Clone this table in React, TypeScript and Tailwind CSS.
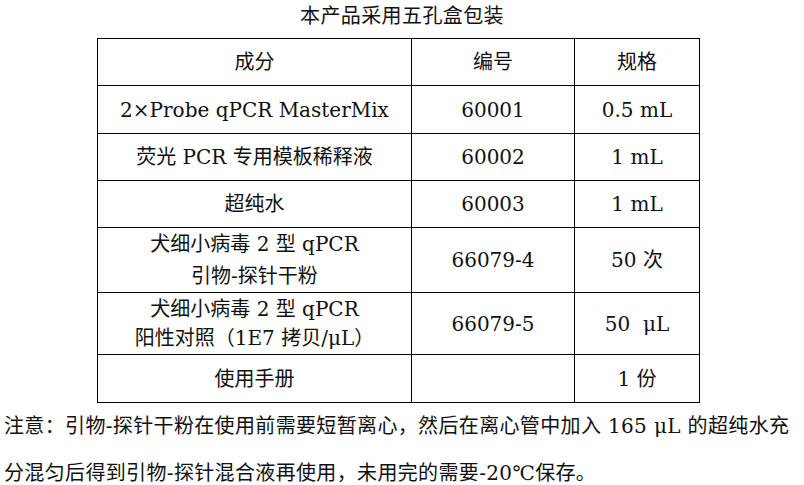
import React from "react";

const font = { fontFamily: '"DejaVu Serif", "Noto Sans CJK SC", serif' };

type Row = { a: React.ReactNode; b: string; c: React.ReactNode; h: string; lead?: string };

const rows: Row[] = [
  { a: "2×Probe qPCR MasterMix", b: "60001", c: "0.5 mL", h: "h-[48px]" },
  { a: "荧光 PCR 专用模板稀释液", b: "60002", c: "1 mL", h: "h-[47px]" },
  { a: "超纯水", b: "60003", c: "1 mL", h: "h-[47px]" },
  {
    a: (
      <>
        犬细小病毒 2 型 qPCR
        <br />
        引物-探针干粉
      </>
    ),
    b: "66079-4",
    c: "50 次",
    h: "h-[62px]",
    lead: "leading-[32px]",
  },
  {
    a: (
      <>
        犬细小病毒 2 型 qPCR
        <br />
        阳性对照（1E7 拷贝/μL）
      </>
    ),
    b: "66079-5",
    c: "50\u00a0\u00a0μL",
    h: "h-[62px]",
    lead: "leading-[29px]",
  },
  { a: "使用手册", b: "", c: "1 份", h: "h-[48px]" },
];

export default function App() {
  return (
    <div className="w-[804px] h-[485px] bg-white text-[#111] text-[20px] font-normal overflow-hidden" style={font}>
      <div className="h-[38px] pt-[2px] leading-[28px] text-center tracking-[0.4px]">本产品采用五孔盒包装</div>
      <div className="pl-[97px]">
        <table className="border-collapse table-fixed w-[602px]">
          <colgroup>
            <col className="w-[314px]" />
            <col className="w-[163px]" />
            <col className="w-[125px]" />
          </colgroup>
          <tbody>
            <tr className="h-[47px]">
              <td className="border border-black text-center p-0 leading-[24px]">成分</td>
              <td className="border border-black text-center p-0 leading-[24px]">编号</td>
              <td className="border border-black text-center p-0 leading-[24px]">规格</td>
            </tr>
            {rows.map((r, i) => (
              <tr key={i} className={r.h}>
                <td className={`border border-black text-center p-0 whitespace-nowrap ${r.lead ?? "leading-[24px]"}`}>{r.a}</td>
                <td className="border border-black text-center p-0 leading-[24px]">{r.b}</td>
                <td className="border border-black text-center p-0 leading-[24px] whitespace-pre">{r.c}</td>
              </tr>
            ))}
          </tbody>
        </table>
      </div>
      <div className="pl-[4px] leading-[47px] whitespace-nowrap tracking-[0.35px]">
        <div>注意：引物-探针干粉在使用前需要短暂离心，然后在离心管中加入 165 μL 的超纯水充</div>
        <div>分混匀后得到引物-探针混合液再使用，未用完的需要-20℃保存。</div>
      </div>
    </div>
  );
}
